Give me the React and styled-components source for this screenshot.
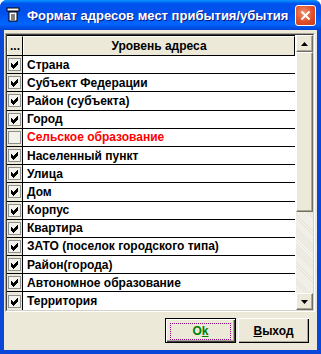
import React from 'react'
import styled, { createGlobalStyle } from 'styled-components'

const GlobalStyle = createGlobalStyle`
  html, body { margin: 0; padding: 0; background: #fff; }
  body { font-family: Tahoma, "DejaVu Sans", "Liberation Sans", sans-serif; }
`

const rows = [
  { text: 'Страна', on: true },
  { text: 'Субъект Федерации', on: true },
  { text: 'Район (субъекта)', on: true },
  { text: 'Город', on: true },
  { text: 'Сельское образование', on: false, red: true },
  { text: 'Населенный пункт', on: true },
  { text: 'Улица', on: true },
  { text: 'Дом', on: true },
  { text: 'Корпус', on: true },
  { text: 'Квартира', on: true },
  { text: 'ЗАТО (поселок городского типа)', on: true },
  { text: 'Район(города)', on: true },
  { text: 'Автономное образование', on: true },
  { text: 'Территория', on: true },
]

const Window = styled.div`
  width: 321px;
  height: 354px;
  box-sizing: border-box;
  background: #0a46d8;
  border-radius: 7px 7px 0 0;
  display: flex;
  flex-direction: column;
  overflow: hidden;
`

const TitleBar = styled.div`
  height: 30px;
  flex: none;
  display: flex;
  align-items: center;
  padding: 0 5px 0 5px;
  background: linear-gradient(180deg, #0997ff 0%, #0053ee 12%, #0050ee 45%, #0066ff 80%, #0042d6 100%);
  color: #fff;
  font-family: "Liberation Sans", Arial, sans-serif;
  font-weight: bold;
  font-size: 13px;
  text-shadow: 1px 1px 0 #0a1883;
`

const TitleText = styled.span`
  flex: 1;
  min-width: 0;
  margin-left: 6px;
  white-space: nowrap;
  overflow: hidden;
`

const CloseBtn = styled.div`
  width: 21px;
  height: 21px;
  flex: none;
  box-sizing: border-box;
  border: 1px solid #fff;
  border-radius: 3px;
  background: radial-gradient(circle at 40% 35%, #f09070 0%, #e0502a 55%, #c43a14 100%);
  display: flex;
  align-items: center;
  justify-content: center;
`

const Body = styled.div`
  flex: 1;
  margin: 0 4px 4px 4px;
  background: #ece9d8;
  display: flex;
  flex-direction: column;
  padding: 3px 2px 0 1px;
`

const Grid = styled.div`
  height: 279px;
  box-sizing: border-box;
  border: 1px solid #aca899;
  border-right-color: #fff;
  border-bottom-color: #fff;
  display: flex;
`

const GridInner = styled.div`
  flex: 1;
  display: flex;
  border: 1px solid #404040;
  border-right-color: #d4d0c8;
  border-bottom-color: #d4d0c8;
  background: #fff;
  overflow: hidden;
`

const Table = styled.div`
  flex: 1;
  display: flex;
  flex-direction: column;
  font-family: "Liberation Sans", Arial, sans-serif;
  font-weight: bold;
  font-size: 12px;
`

const HeaderRow = styled.div`
  height: 19px;
  flex: none;
  display: flex;
  background: #ece9d8;
  border-top: 1px solid #000;
  border-bottom: 1px solid #000;
`

const HeadCell = styled.div`
  width: ${p => p.$w ? p.$w + 'px' : 'auto'};
  flex: ${p => p.$w ? 'none' : 1};
  display: flex;
  align-items: center;
  justify-content: center;
  box-sizing: border-box;
  border-top: 1px solid #fff;
  border-left: 1px solid #fff;
  border-right: 1px solid #000;
  color: #000;
`

const Row = styled.div`
  height: 17.2px;
  flex: none;
  display: flex;
  border-bottom: 1px solid #000;
`

const CheckCell = styled.div`
  width: 16px;
  flex: none;
  box-sizing: border-box;
  background: #ece9d8;
  border-right: 1px solid #000;
  display: flex;
  align-items: center;
  padding-left: 1px;
`

const Box = styled.div`
  width: 13px;
  height: 13px;
  box-sizing: border-box;
  border: 1px solid #8e8f8f;
  background: #f2f1ea;
  display: flex;
  align-items: center;
  justify-content: center;
`

const TextCell = styled.div`
  flex: 1;
  display: flex;
  align-items: center;
  padding-left: 4px;
  color: ${p => p.$red ? '#ff0000' : '#000'};
  white-space: nowrap;
`

const ScrollBar = styled.div`
  width: 17px;
  flex: none;
  display: flex;
  flex-direction: column;
  background: #f0efe6 repeating-linear-gradient(45deg, #f4f3ee 0 1px, #e9e7dc 1px 2px);
  border-left: 1px solid #fff;
`

const ScrollBtn = styled.div`
  height: 17px;
  flex: none;
  box-sizing: border-box;
  background: #ece9d8;
  border: 1px solid #fff;
  border-right-color: #716f64;
  border-bottom-color: #716f64;
  box-shadow: inset -1px -1px 0 #aca899;
  display: flex;
  align-items: center;
  justify-content: center;
`

const Thumb = styled.div`
  height: ${p => p.$h}px;
  flex: none;
  box-sizing: border-box;
  background: #ece9d8;
  border: 1px solid #fff;
  border-right-color: #716f64;
  border-bottom-color: #716f64;
  box-shadow: inset -1px -1px 0 #aca899;
`

const Track = styled.div`
  flex: 1;
`

const Footer = styled.div`
  flex: 1;
  display: flex;
  justify-content: flex-end;
  align-items: flex-start;
  gap: 2px;
  padding: 6px 6px 0 0;
`

const Button = styled.div`
  width: 71px;
  height: 25px;
  box-sizing: border-box;
  display: flex;
  align-items: center;
  justify-content: center;
  background: #ece9d8;
  border: ${p => p.$default ? '1px solid #000' : 'none'};
  box-shadow: ${p => p.$default
    ? 'inset 1px 1px 0 #fff, inset -1px -1px 0 #404040, inset -2px -2px 0 #aca899'
    : 'inset 1px 1px 0 #fff, inset -1px -1px 0 #000, inset -2px -2px 0 #aca899'};
  font-family: "Liberation Sans", Arial, sans-serif;
  font-weight: bold;
  font-size: 12px;
  color: ${p => p.$green ? '#008000' : '#000'};
`

const Focus = styled.div`
  width: 59px;
  height: 15px;
  box-sizing: border-box;
  outline: 1px dotted #8a0a8a;
  display: flex;
  align-items: center;
  justify-content: center;
  margin-top: 1px;
`

const U = styled.span`
  text-decoration: underline;
`

const Check = () => (
  <svg width="9" height="9" viewBox="0 0 9 9">
    <path d="M1 3.5 L3.5 6 L8 1.5 M1 4.5 L3.5 7 L8 2.5 M1 5.5 L3.5 8 L8 3.5" stroke="#000" strokeWidth="1" fill="none" shapeRendering="crispEdges" />
  </svg>
)

const Arrow = ({ up }) => (
  <svg width="7" height="4" viewBox="0 0 7 4">
    <path d={up ? 'M0 4 L3.5 0 L7 4 Z' : 'M0 0 L3.5 4 L7 0 Z'} fill="#000" />
  </svg>
)

const AppIcon = () => (
  <svg width="16" height="16" viewBox="0 0 16 16">
    <rect x="2" y="1" width="12" height="3" fill="#fff" stroke="#000" />
    <rect x="4" y="5" width="8" height="9" fill="#fff" stroke="#000" />
    <path d="M6 8 H10 M6 10 H10 M6 12 H10" stroke="#000" />
  </svg>
)

const App = () => {
  return (
    <>
      <GlobalStyle />
      <Window>
        <TitleBar>
          <AppIcon />
          <TitleText>Формат адресов мест прибытия/убытия</TitleText>
          <CloseBtn>
            <svg width="11" height="11" viewBox="0 0 11 11">
              <path d="M1.5 1.5 L9.5 9.5 M9.5 1.5 L1.5 9.5" stroke="#fff" strokeWidth="2" />
            </svg>
          </CloseBtn>
        </TitleBar>
        <Body>
          <Grid>
            <GridInner>
              <Table>
                <HeaderRow>
                  <HeadCell $w={16}>...</HeadCell>
                  <HeadCell>Уровень адреса</HeadCell>
                </HeaderRow>
                {rows.map((r, i) => (
                  <Row key={i}>
                    <CheckCell>
                      <Box>{r.on && <Check />}</Box>
                    </CheckCell>
                    <TextCell $red={r.red}>{r.text}</TextCell>
                  </Row>
                ))}
              </Table>
              <ScrollBar>
                <ScrollBtn><Arrow up /></ScrollBtn>
                <Thumb $h={160} />
                <Track />
                <ScrollBtn><Arrow /></ScrollBtn>
              </ScrollBar>
            </GridInner>
          </Grid>
          <Footer>
            <Button $default $green>
              <Focus>O<U>k</U></Focus>
            </Button>
            <Button><U>В</U>ыход</Button>
          </Footer>
        </Body>
      </Window>
    </>
  )
}

export default App
